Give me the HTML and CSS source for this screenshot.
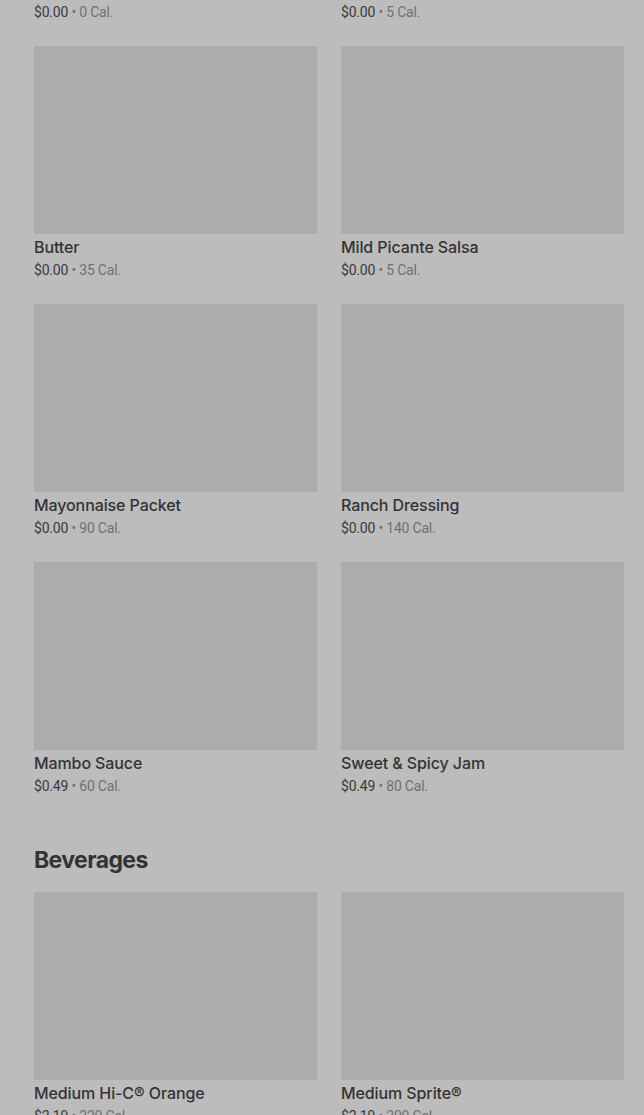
FILE: index.html
```html
<!DOCTYPE html>
<html lang="en">
<head>
  <meta charset="UTF-8" />
  <meta name="viewport" content="width=device-width, initial-scale=1.0"/>
  <title>Menu</title>
  <link rel="stylesheet" href="styles.css">
</head>
<body>
  <div class="menu">
    <div class="grid">
      <div class="item">
        <div class="price">$0.00 <span class="cal">• 0 Cal.</span></div>
      </div>
      <div class="item">
        <div class="price">$0.00 <span class="cal">• 5 Cal.</span></div>
      </div>

      <div class="item">
        <div class="thumb"></div>
        <div class="name">Butter</div>
        <div class="price">$0.00 <span class="cal">• 35 Cal.</span></div>
      </div>
      <div class="item">
        <div class="thumb"></div>
        <div class="name">Mild Picante Salsa</div>
        <div class="price">$0.00 <span class="cal">• 5 Cal.</span></div>
      </div>

      <div class="item">
        <div class="thumb"></div>
        <div class="name">Mayonnaise Packet</div>
        <div class="price">$0.00 <span class="cal">• 90 Cal.</span></div>
      </div>
      <div class="item">
        <div class="thumb"></div>
        <div class="name">Ranch Dressing</div>
        <div class="price">$0.00 <span class="cal">• 140 Cal.</span></div>
      </div>

      <div class="item">
        <div class="thumb"></div>
        <div class="name">Mambo Sauce</div>
        <div class="price">$0.49 <span class="cal">• 60 Cal.</span></div>
      </div>
      <div class="item">
        <div class="thumb"></div>
        <div class="name">Sweet &amp; Spicy Jam</div>
        <div class="price">$0.49 <span class="cal">• 80 Cal.</span></div>
      </div>
    </div>

    <h2 class="section-title">Beverages</h2>

    <div class="grid">
      <div class="item">
        <div class="thumb"></div>
        <div class="name">Medium Hi-C® Orange</div>
        <div class="price">$2.19 <span class="cal">• 220 Cal.</span></div>
      </div>
      <div class="item">
        <div class="thumb"></div>
        <div class="name">Medium Sprite®</div>
        <div class="price">$2.19 <span class="cal">• 200 Cal.</span></div>
      </div>
    </div>
  </div>
</body>
</html>
```

FILE: styles.css
```css
* {
  box-sizing: border-box;
  margin: 0;
  padding: 0;
}

body {
  background: #bcbcbc;
  font-family: Roboto, "Liberation Sans", sans-serif;
  color: #2e2e2e;
  overflow: hidden;
}

.menu {
  padding: 0 20px 0 34px;
}

.grid {
  display: grid;
  grid-template-columns: 283px 283px;
  column-gap: 24px;
  row-gap: 22px;
}

.thumb {
  height: 188px;
  background: #acacac;
}

.name {
  font-family: Inter, Roboto, sans-serif;
  font-size: 16px;
  font-weight: 500;
  line-height: 22px;
  margin-top: 2px;
  letter-spacing: -0.1px;
  color: #333;
}

.price {
  font-size: 14px;
  line-height: 24px;
  color: #3a3a3a;
  letter-spacing: -0.2px;
}

.cal {
  color: #707070;
}

.section-title {
  font-family: Inter, Roboto, sans-serif;
  font-size: 23px;
  font-weight: 700;
  line-height: 32px;
  letter-spacing: -0.6px;
  color: #333;
  margin: 46px 0 16px;
}
```
